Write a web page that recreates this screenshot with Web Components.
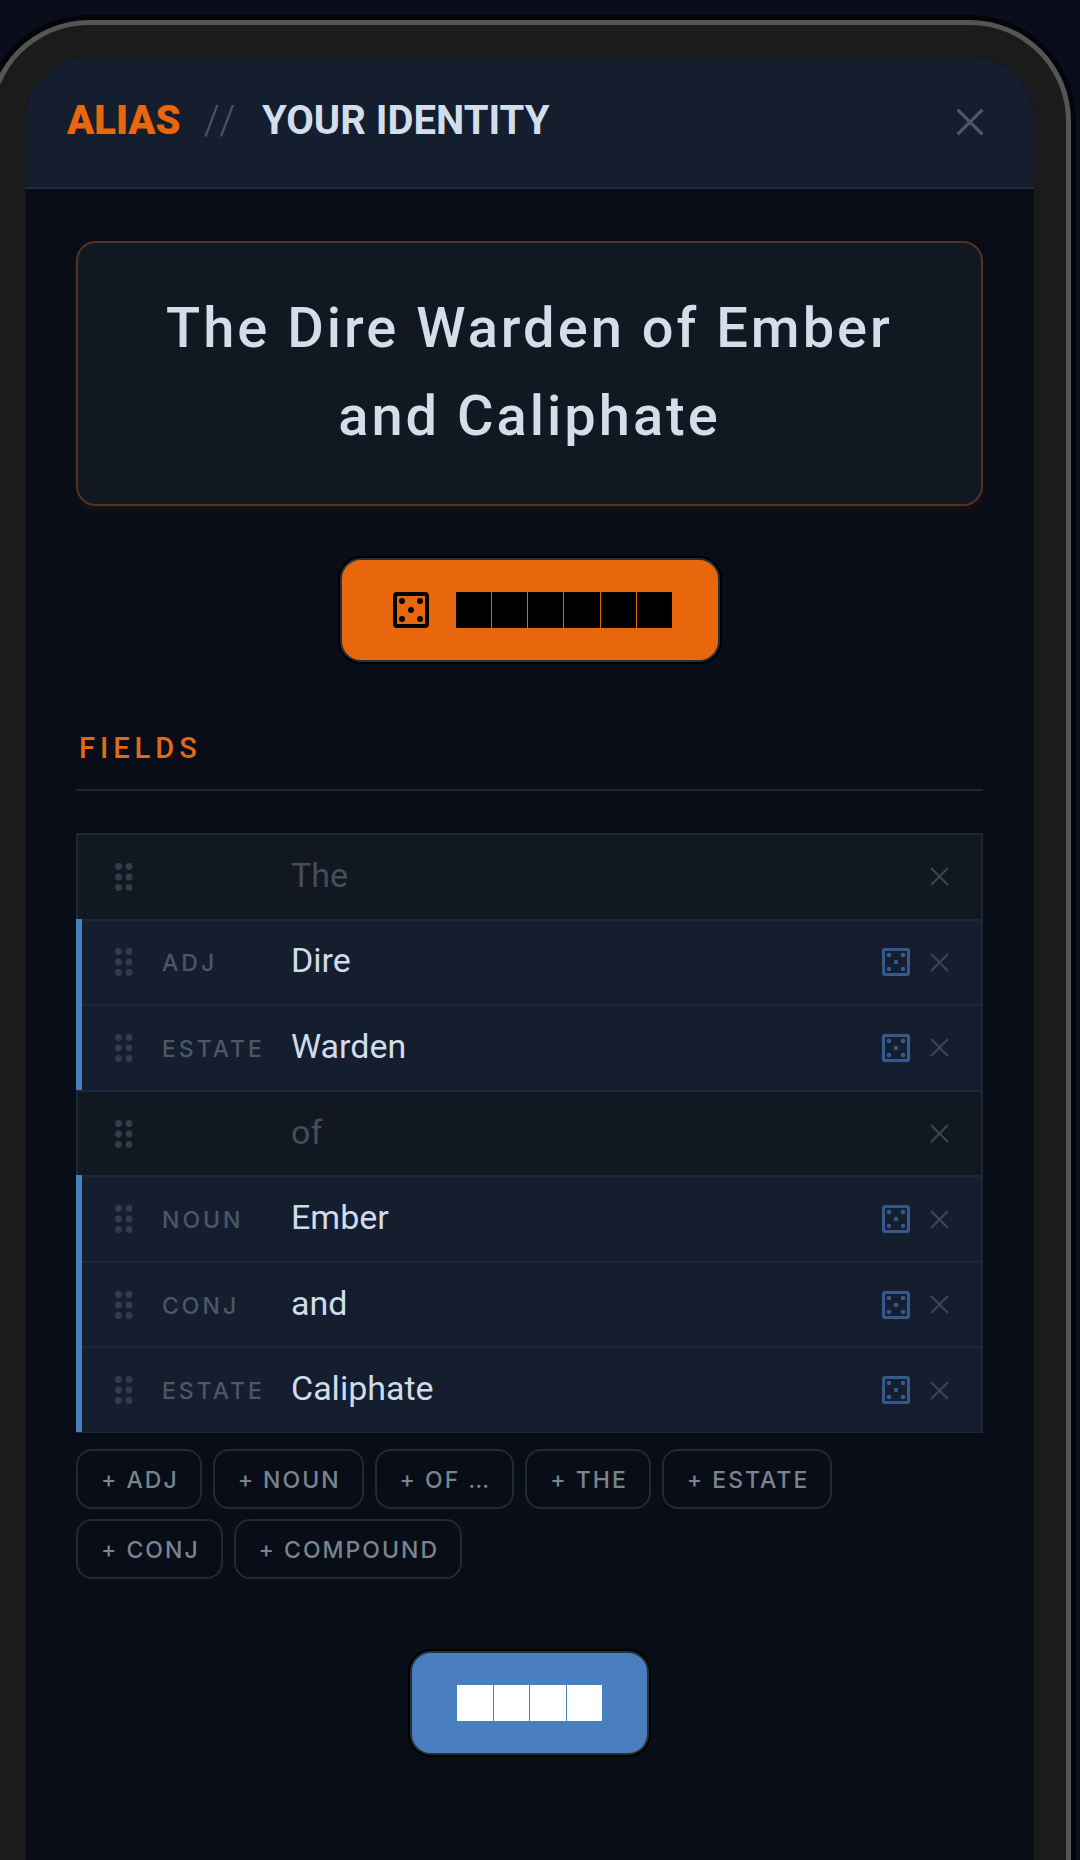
<!DOCTYPE html>
<html lang="en">
<head>
<meta charset="utf-8">
<meta name="viewport" content="width=device-width, initial-scale=1">
<title>Alias</title>
<style>
    html, body {
        margin: 0;
        height: 100%;
    }
    body {
        --bg: #080d18;
        --panel: #111822;
        --raised: #151e2e;
        --line: #1d2834;
        --text: #d2deea;
        --muted: #4b5766;
        --orange: #e8670c;
        --blue: #4a7fbf;
        overflow: hidden;
        background: #090e1a;
        color: var(--text);
        font-family: Roboto, "Liberation Sans", sans-serif;
    }
</style>
</head>
<body>
<phone-frame>
    <alias-header section="ALIAS">YOUR IDENTITY</alias-header>
    <alias-editor>
        <alias-name>The Dire Warden of Ember and Caliphate</alias-name>
        <block-button blocks="6" label="Roll" class="roll"><dice-icon></dice-icon></block-button>
        <section-title>FIELDS</section-title>
        <field-list>
            <field-row>The</field-row>
            <field-row kind="ADJ">Dire</field-row>
            <field-row kind="ESTATE">Warden</field-row>
            <field-row>of</field-row>
            <field-row kind="NOUN">Ember</field-row>
            <field-row kind="CONJ">and</field-row>
            <field-row kind="ESTATE">Caliphate</field-row>
        </field-list>
        <chip-bar>
            <add-chip>+ ADJ</add-chip>
            <add-chip>+ NOUN</add-chip>
            <add-chip>+ OF …</add-chip>
            <add-chip>+ THE</add-chip>
            <add-chip>+ ESTATE</add-chip>
            <add-chip>+ CONJ</add-chip>
            <add-chip>+ COMPOUND</add-chip>
        </chip-bar>
        <block-button blocks="4" label="Done" class="done"></block-button>
    </alias-editor>
</phone-frame>
<script>
const define = (name, render) => customElements.define(name, class extends HTMLElement {
    constructor() {
        super();
        this.attachShadow({ mode: 'open' });
    }
    connectedCallback() {
        this.shadowRoot.innerHTML = render(this);
    }
});

const cross = () => `
    <svg viewBox="0 0 18 18" aria-hidden="true">
        <path d="M1 1 17 17M17 1 1 17" fill="none" stroke="currentColor" stroke-width="2"/>
    </svg>
`;

define('phone-frame', () => `
    <style>
        :host {
            display: block;
            box-sizing: border-box;
            min-height: 100vh;
            margin: 25px 14px 0 -7px;
            border: 32px solid #1b1b1b;
            border-bottom: 0;
            border-radius: 96px 96px 0 0;
            background: #1b1b1b;
            box-shadow: 0 0 0 5px #555, 0 0 0 10px #03050b;
        }
        main {
            min-height: 100vh;
            overflow: hidden;
            border-radius: 64px 64px 0 0;
            background: var(--bg);
        }
    </style>
    <main><slot></slot></main>
`);

define('alias-header', (el) => `
    <style>
        :host {
            display: block;
        }
        header {
            display: flex;
            align-items: center;
            justify-content: space-between;
            height: 130px;
            padding: 0 50px 0 42px;
            border-bottom: 2px solid #222c3d;
            background: #151e2e;
        }
        h1 {
            display: flex;
            gap: 23px;
            margin: 0;
            padding-bottom: 2px;
            font-size: 40px;
            line-height: 48px;
            font-weight: 700;
        }
        b {
            color: var(--orange);
        }
        i {
            color: var(--muted);
            font-style: normal;
            font-weight: 300;
            letter-spacing: 4px;
        }
        button {
            display: flex;
            padding: 0;
            border: 0;
            background: none;
            color: #4d5968;
        }
        svg {
            width: 28px;
            height: 28px;
        }
    </style>
    <header>
        <h1><b>${el.getAttribute('section')}</b><i>//</i><slot></slot></h1>
        <button aria-label="Close">${cross()}</button>
    </header>
`);

define('alias-editor', () => `
    <style>
        :host {
            display: flex;
            flex-direction: column;
            padding: 52px 51px;
        }
        ::slotted(.roll) {
            --fill: var(--orange);
            --ink: #000;
            align-self: center;
            margin-top: 52px;
        }
        ::slotted(.done) {
            --fill: var(--blue);
            --ink: #fff;
            align-self: center;
            margin-top: 72px;
        }
        ::slotted(section-title) {
            margin-top: 68px;
        }
        ::slotted(field-list) {
            margin-top: 42px;
        }
        ::slotted(chip-bar) {
            margin-top: 16px;
        }
    </style>
    <slot></slot>
`);

define('alias-name', () => `
    <style>
        :host {
            display: block;
            padding: 41px 64px 44px;
            border: 2px solid #54331f;
            border-radius: 20px;
            background: var(--panel);
            box-shadow: 0 4px 8px rgba(232, 103, 12, 0.08);
            text-align: center;
            font-size: 56px;
            line-height: 88px;
            font-weight: 500;
            letter-spacing: 3px;
        }
    </style>
    <slot></slot>
`);

define('dice-icon', () => `
    <style>
        :host {
            display: flex;
            width: var(--size, 36px);
            height: var(--size, 36px);
        }
    </style>
    <svg viewBox="3 3 18 18" fill="currentColor" aria-hidden="true">
        <rect x="4" y="4" width="16" height="16" rx="1" fill="none" stroke="currentColor" stroke-width="2"/>
        <circle cx="7.5" cy="7.5" r="1.5"/>
        <circle cx="16.5" cy="7.5" r="1.5"/>
        <circle cx="12" cy="12" r="1.5"/>
        <circle cx="7.5" cy="16.5" r="1.5"/>
        <circle cx="16.5" cy="16.5" r="1.5"/>
    </svg>
`);

define('block-button', (el) => `
    <style>
        :host {
            display: block;
        }
        button {
            display: flex;
            align-items: center;
            height: 104px;
            padding: 0 45px;
            border: 2px solid #26303a;
            border-radius: 21px;
            background: var(--fill);
            box-shadow: 0 0 0 2px #000;
            color: var(--ink);
        }
        ::slotted(dice-icon) {
            margin: 0 27px 0 6px;
        }
        span {
            display: flex;
            gap: 1px;
            width: calc(var(--blocks) * 36px + 1px);
        }
        i {
            flex: 1;
            height: 36px;
            background: currentColor;
        }
    </style>
    <button aria-label="${el.getAttribute('label')}">
        <slot></slot>
        <span style="--blocks: ${el.getAttribute('blocks')}">${'<i></i>'.repeat(+el.getAttribute('blocks'))}</span>
    </button>
`);

define('section-title', () => `
    <style>
        :host {
            display: block;
            border-bottom: 2px solid #1c2738;
        }
        h2 {
            margin: 0;
            padding: 0 3px 23px;
            color: #de6b17;
            font-size: 29px;
            line-height: 36px;
            font-weight: 500;
            letter-spacing: 5px;
        }
    </style>
    <h2><slot></slot></h2>
`);

define('field-list', () => `
    <style>
        :host {
            display: flex;
            flex-direction: column;
            min-height: 600px;
            box-sizing: border-box;
            border: solid var(--line);
            border-width: 0 2px 1px 0;
        }
    </style>
    <slot></slot>
`);

define('field-row', (el) => {
    const kind = el.getAttribute('kind');
    return `
    <style>
        :host {
            display: flex;
            flex: 1;
            align-items: center;
            box-sizing: border-box;
            padding: 2px 32px 0 39px;
            box-shadow: inset 2px 2px var(--line);
            background: var(--panel);
            color: #434e5a;
            font-size: 34px;
            line-height: 40px;
        }
        :host([kind]) {
            box-shadow: inset 6px 0 var(--blue), inset 0 2px var(--line);
            background: var(--raised);
            color: #d0dbec;
        }
        .grip {
            width: 18px;
            height: 28px;
            color: #333d4a;
        }
        .kind {
            width: 129px;
            margin-left: 29px;
            padding-top: 2px;
            color: var(--muted);
            font: 500 23px/30px Inter, sans-serif;
            letter-spacing: 3px;
        }
        .value {
            flex: 1;
            padding-bottom: 4px;
        }
        button {
            display: flex;
            padding: 0;
            border: 0;
            background: none;
            color: #3b4653;
        }
        .dice {
            --size: 28px;
            margin-right: 20px;
            color: #35598a;
        }
        .cross svg {
            width: 19px;
            height: 19px;
        }
    </style>
    <svg class="grip" viewBox="0 0 18 28" fill="currentColor" aria-hidden="true">
        <circle cx="3.5" cy="3.5" r="3.4"/><circle cx="14" cy="3.5" r="3.4"/>
        <circle cx="3.5" cy="14" r="3.4"/><circle cx="14" cy="14" r="3.4"/>
        <circle cx="3.5" cy="24.5" r="3.4"/><circle cx="14" cy="24.5" r="3.4"/>
    </svg>
    <span class="kind">${kind ?? ''}</span>
    <span class="value"><slot></slot></span>
    ${kind ? '<button class="dice" aria-label="Roll field"><dice-icon></dice-icon></button>' : ''}
    <button class="cross" aria-label="Remove field">${cross()}</button>
    `;
});

define('chip-bar', () => `
    <style>
        :host {
            display: flex;
            flex-wrap: wrap;
            gap: 10px 11px;
        }
    </style>
    <slot></slot>
`);

define('add-chip', () => `
    <style>
        :host {
            display: block;
        }
        button {
            display: block;
            height: 60px;
            padding: 2px 21px 0 23px;
            border: 2px solid #1e2a36;
            border-radius: 16px;
            background: none;
            color: #78848e;
            font: 500 23px/30px Inter, sans-serif;
            letter-spacing: 2px;
        }
    </style>
    <button><slot></slot></button>
`);
</script>
</body>
</html>
